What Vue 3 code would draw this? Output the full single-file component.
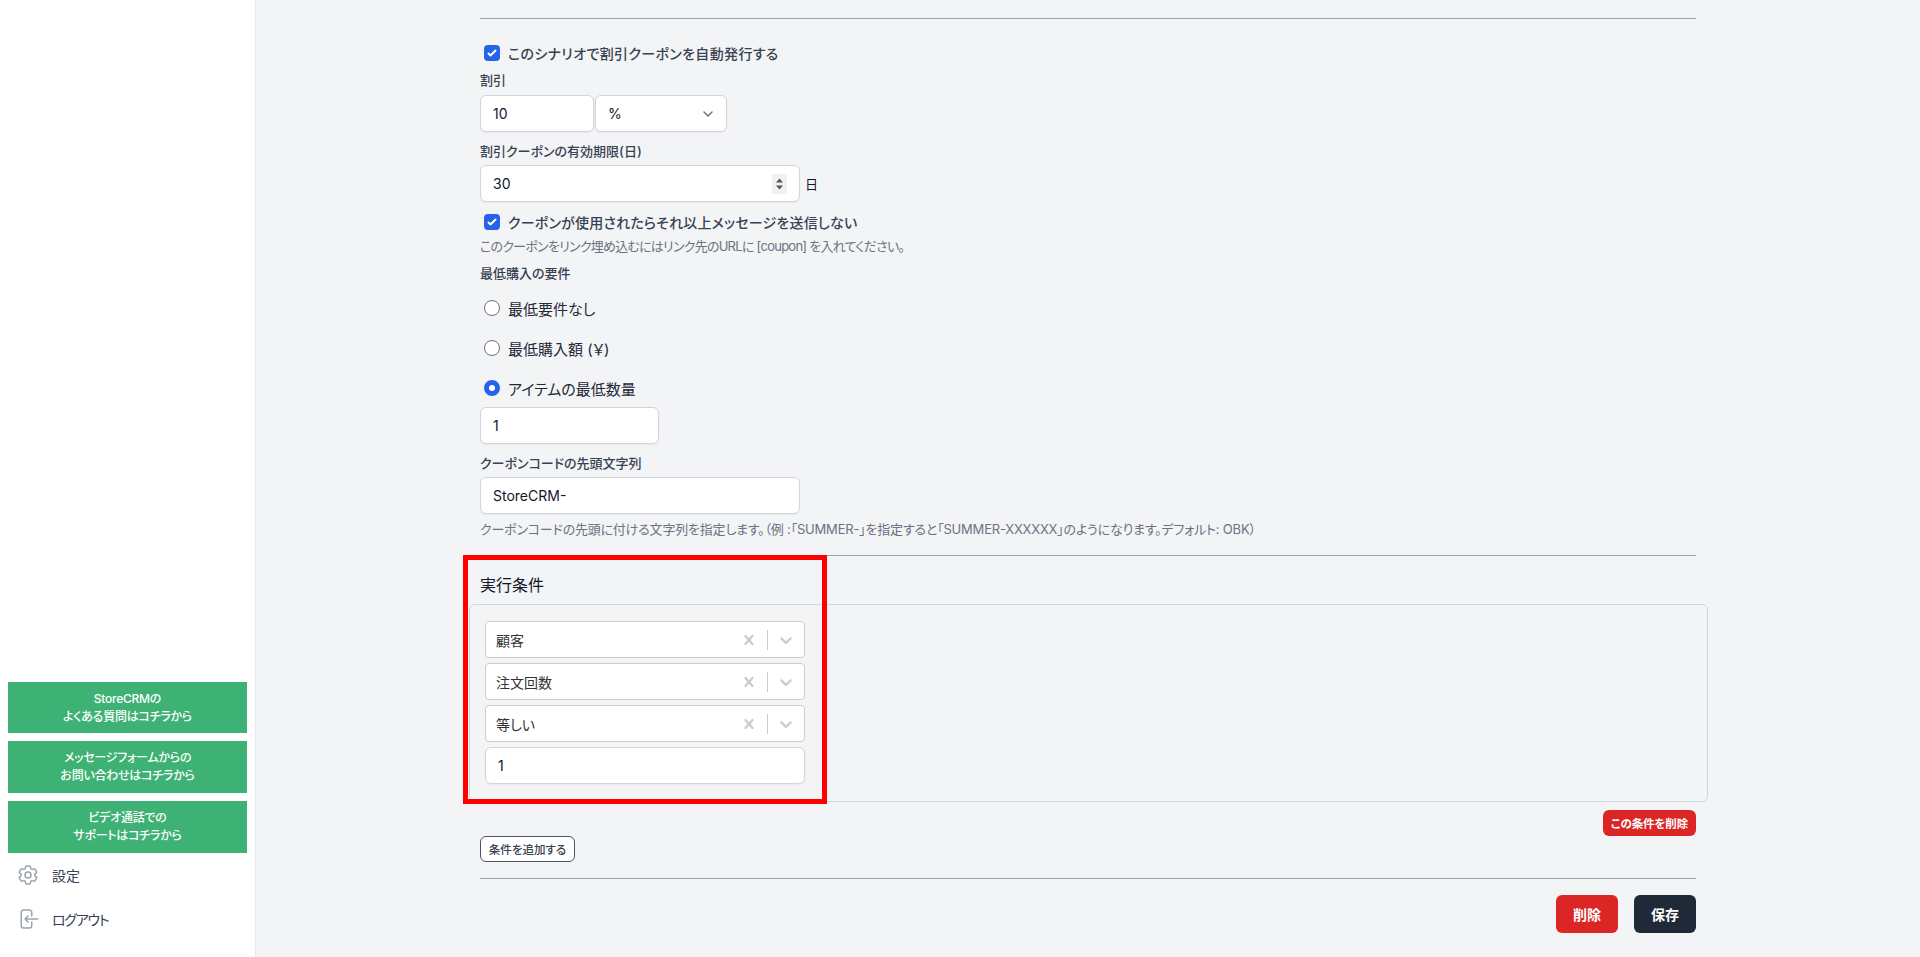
<script setup>
const selects = ['顧客', '注文回数', '等しい']
const supportLinks = [
  ['StoreCRMの', 'よくある質問はコチラから'],
  ['メッセージフォームからの', 'お問い合わせはコチラから'],
  ['ビデオ通話での', 'サポートはコチラから'],
]
</script>

<template>
  <div class="page">
    <aside class="sidebar">
      <a v-for="(link, i) in supportLinks" :key="i" class="support" :class="{ tall: i > 0 }">
        <span>{{ link[0] }}</span><span>{{ link[1] }}</span>
      </a>
      <div class="nav first">
        <svg class="nav-icon" viewBox="0 0 24 24" fill="none" stroke="currentColor" stroke-width="1.5" stroke-linecap="round" stroke-linejoin="round"><path d="M9.594 3.94c.09-.542.56-.94 1.11-.94h2.593c.55 0 1.02.398 1.11.94l.213 1.281c.063.374.313.686.645.87.074.04.147.083.22.127.324.196.72.257 1.075.124l1.217-.456a1.125 1.125 0 011.37.49l1.296 2.247a1.125 1.125 0 01-.26 1.431l-1.003.827c-.293.24-.438.613-.431.992a6.759 6.759 0 010 .255c-.007.378.138.75.43.99l1.005.828c.424.35.534.954.26 1.43l-1.298 2.247a1.125 1.125 0 01-1.369.491l-1.217-.456c-.355-.133-.75-.072-1.076.124a6.57 6.57 0 01-.22.128c-.331.183-.581.495-.644.869l-.213 1.28c-.09.543-.56.941-1.11.941h-2.594c-.55 0-1.02-.398-1.11-.94l-.213-1.281c-.062-.374-.312-.686-.644-.87a6.52 6.52 0 01-.22-.127c-.325-.196-.72-.257-1.076-.124l-1.217.456a1.125 1.125 0 01-1.369-.49l-1.297-2.247a1.125 1.125 0 01.26-1.431l1.004-.827c.292-.24.437-.613.43-.992a6.932 6.932 0 010-.255c.007-.378-.138-.75-.43-.99l-1.004-.828a1.125 1.125 0 01-.26-1.43l1.297-2.247a1.125 1.125 0 011.37-.491l1.216.456c.356.133.751.072 1.076-.124.072-.044.146-.087.22-.128.332-.183.582-.495.644-.869l.214-1.281z"/><path d="M15 12a3 3 0 11-6 0 3 3 0 016 0z"/></svg>
        <span>設定</span>
      </div>
      <div class="nav">
        <svg class="nav-icon" viewBox="0 0 24 24" fill="none" stroke="currentColor" stroke-width="1.5" stroke-linecap="round" stroke-linejoin="round"><path d="M15.75 9V5.25A2.25 2.25 0 0013.5 3h-6a2.25 2.25 0 00-2.25 2.25v13.5A2.25 2.25 0 007.5 21h6a2.25 2.25 0 002.25-2.25V15M12 9l-3 3m0 0l3 3m-3-3h12.75"/></svg>
        <span class="nav-tight">ログアウト</span>
      </div>
    </aside>

    <main class="main">
      <div class="content">
        <hr class="rule" />

        <label class="check-row first-check">
          <span class="checkbox"><svg viewBox="0 0 16 16"><path d="M12.207 4.793a1 1 0 010 1.414l-5 5a1 1 0 01-1.414 0l-2-2a1 1 0 011.414-1.414L6.5 9.086l4.293-4.293a1 1 0 011.414 0z" fill="#fff"/></svg></span>
          <span class="check-text">このシナリオで割引クーポンを自動発行する</span>
        </label>

        <div class="label discount-label">割引</div>
        <div class="discount-row">
          <div class="box value-box discount-value">10</div>
          <div class="box value-box discount-unit">
            %
            <svg class="unit-chevron" viewBox="0 0 20 20" fill="none" stroke="#6b7280" stroke-width="1.5" stroke-linecap="round" stroke-linejoin="round"><path d="M6 8l4 4 4-4"/></svg>
          </div>
        </div>

        <div class="label expiry-label">割引クーポンの有効期限(日)</div>
        <div class="expiry-row">
          <div class="box value-box wide">
            30
            <span class="spinner">
              <svg viewBox="0 0 15 20"><path d="M7.5 4.5L11 8.5H4z" fill="#555"/><path d="M7.5 15.5L4 11.5h7z" fill="#555"/></svg>
            </span>
          </div>
          <span class="unit">日</span>
        </div>

        <label class="check-row second-check">
          <span class="checkbox"><svg viewBox="0 0 16 16"><path d="M12.207 4.793a1 1 0 010 1.414l-5 5a1 1 0 01-1.414 0l-2-2a1 1 0 011.414-1.414L6.5 9.086l4.293-4.293a1 1 0 011.414 0z" fill="#fff"/></svg></span>
          <span class="check-text">クーポンが使用されたらそれ以上メッセージを送信しない</span>
        </label>
        <p class="help coupon-help">このクーポンをリンク埋め込むにはリンク先のURLに [coupon] を入れてください。</p>

        <div class="label min-label">最低購入の要件</div>
        <div class="radio-list">
          <label class="radio-row"><span class="radio"></span><span>最低要件なし</span></label>
          <label class="radio-row"><span class="radio"></span><span>最低購入額 (￥)</span></label>
          <label class="radio-row"><span class="radio on"></span><span>アイテムの最低数量</span></label>
        </div>
        <div class="box value-box quantity">1</div>

        <div class="label prefix-label">クーポンコードの先頭文字列</div>
        <div class="box value-box wide">StoreCRM-</div>
        <p class="help prefix-help">クーポンコードの先頭に付ける文字列を指定します。（例 :「SUMMER-」を指定すると「SUMMER-XXXXXX」のようになります。デフォルト: OBK）</p>

        <hr class="rule section-rule" />

        <h3 class="section-title">実行条件</h3>
        <div class="condition-panel">
          <div class="condition-fields">
            <div v-for="item in selects" :key="item" class="combo">
              <span class="combo-value">{{ item }}</span>
              <svg class="combo-clear" viewBox="0 0 20 20"><path fill="#cccccc" d="M14.348 14.849c-.469.469-1.229.469-1.697 0L10 11.819l-2.651 3.029c-.469.469-1.229.469-1.697 0-.469-.469-.469-1.229 0-1.697l2.758-3.15-2.759-3.152c-.469-.469-.469-1.228 0-1.697s1.228-.469 1.697 0L10 8.183l2.651-3.031c.469-.469 1.228-.469 1.697 0s.469 1.229 0 1.697l-2.758 3.152 2.758 3.15c.469.469.469 1.229 0 1.698z"/></svg>
              <span class="combo-sep"></span>
              <svg class="combo-arrow" viewBox="0 0 20 20"><path fill="#cccccc" d="M4.516 7.548c.436-.446 1.043-.481 1.576 0L10 11.295l3.908-3.747c.533-.481 1.141-.446 1.574 0 .436.445.408 1.197 0 1.615-.406.418-4.695 4.502-4.695 4.502-.217.223-.502.335-.787.335s-.57-.112-.789-.335c0 0-4.287-4.084-4.695-4.502s-.436-1.17 0-1.615z"/></svg>
            </div>
            <div class="box value-box condition-input">1</div>
          </div>
        </div>

        <div class="remove-row"><button class="btn-small danger">この条件を削除</button></div>
        <button class="btn-add">条件を追加する</button>

        <hr class="rule footer-rule" />
        <div class="actions">
          <button class="btn danger">削除</button>
          <button class="btn dark">保存</button>
        </div>
      </div>
    </main>

    <div class="highlight"></div>
  </div>
</template>

<style>
html, body { margin: 0; padding: 0; background: #f3f4f6; }
</style>

<style scoped>
* { box-sizing: border-box; }
.page {
  display: flex;
  position: relative;
  height: 957px;
  overflow: hidden;
  background: #f3f4f6;
  color: #374151;
  font-family: Inter, "Noto Sans CJK JP", sans-serif;
  font-size: 14px;
  font-feature-settings: "palt";
}
.sidebar {
  width: 256px;
  flex: none;
  display: flex;
  flex-direction: column;
  justify-content: flex-end;
  background: #fff;
  border-right: 1px solid #e5e7eb;
  padding: 0 8px 16px;
}
.support {
  display: flex;
  flex-direction: column;
  align-items: center;
  justify-content: center;
  height: 51px;
  margin-bottom: 8px;
  background: #3eb274;
  color: #fff;
  font-size: 12px;
  font-weight: 500;
  line-height: 18px;
  letter-spacing: -.25px;
}
.support.tall { height: 52px; }
.support:last-of-type { margin-bottom: 0; }
.nav {
  display: flex;
  align-items: center;
  height: 44px;
  padding-left: 8px;
  gap: 12px;
  color: #374151;
  font-size: 14px;
  font-weight: 400;
}
.nav-tight { letter-spacing: -1.3px; }
.nav-icon { width: 24px; height: 24px; color: #9ca3af; flex: none; }

.main { flex: 1; min-width: 0; padding-left: 224px; }
.content { width: 1216px; padding-top: 18px; }
.rule { margin: 0; border: 0; height: 1px; background: #9ca3af; }

.check-row { display: flex; align-items: center; height: 20px; padding-left: 4px; gap: 8px; }
.first-check { margin-top: 24px; }
.second-check { margin-top: 10px; }
.check-text { font-weight: 500; font-size: 14px; letter-spacing: .2px; }
.first-check .check-text { letter-spacing: .35px; }
.checkbox { width: 16px; height: 16px; border-radius: 4px; background: #2563eb; flex: none; display: flex; }
.checkbox svg { width: 16px; height: 16px; }

.label { font-size: 13px; line-height: 18px; font-weight: 500; }
.discount-label { margin-top: 8px; }
.discount-row { display: flex; gap: 1px; margin-top: 6px; }
.expiry-label { margin-top: 10px; }
.expiry-row { display: flex; align-items: center; gap: 5px; margin-top: 5px; }
.min-label { margin-top: 10px; }
.prefix-label { margin-top: 10px; }

.box {
  height: 37px;
  background: #fff;
  border: 1px solid #d1d5db;
  border-radius: 6px;
  box-shadow: 0 1px 2px rgba(0, 0, 0, .05);
}
.value-box { display: flex; align-items: center; padding: 0 12px; color: #111827; font-size: 14px; position: relative; }
.discount-value { width: 114px; }
.discount-unit { width: 132px; justify-content: space-between; }
.unit-chevron { width: 20px; height: 20px; position: absolute; right: 8px; top: 8px; }
.wide { width: 320px; }
.unit { color: #111827; font-size: 13px; }
.spinner { position: absolute; right: 12px; top: 8px; width: 15px; height: 20px; background: #f0f0f0; display: flex; }
.spinner svg { width: 15px; height: 20px; }
.quantity { width: 179px; margin-top: 9px; }
.prefix-label + .box { margin-top: 5px; }

.help { margin: 0; font-size: 13px; line-height: 16px; color: #6b7280; letter-spacing: -.2px; }
.coupon-help { margin-top: 6px; letter-spacing: -.75px; }
.prefix-help { margin-top: 7px; }

.radio-list { display: flex; flex-direction: column; gap: 20px; margin-top: 16px; }
.radio-row { display: flex; align-items: center; height: 20px; gap: 8px; padding-left: 4px; color: #1f2937; font-size: 15px; font-weight: 400; }
.radio { width: 16px; height: 16px; border-radius: 50%; background: #fff; border: 1px solid #6b7280; flex: none; }
.radio.on { border: 5px solid #2563eb; }

.section-rule { margin-top: 18px; }
.section-title { margin: 18px 0 0; font-size: 16px; font-weight: 400; line-height: 22px; color: #111827; }
.condition-panel {
  width: 1239px;
  height: 198px;
  margin: 8px 0 0 -11px;
  padding: 16px 15px 15px;
  border: 1px solid #d1d5db;
  border-radius: 6px;
}
.condition-fields { width: 320px; display: flex; flex-direction: column; gap: 5px; }
.combo {
  height: 37px;
  display: flex;
  align-items: center;
  background: #fff;
  border: 1px solid #cccccc;
  border-radius: 4px;
  padding: 0 8px 0 10px;
}
.combo-value { flex: 1; font-size: 14px; color: #333; }
.combo-clear { width: 20px; height: 20px; }
.combo-sep { width: 1px; height: 20px; margin: 0 8px 0 8px; background: #cccccc; }
.combo-arrow { width: 20px; height: 20px; }
.condition-input { width: 100%; padding-left: 12px; }

.remove-row { display: flex; justify-content: flex-end; margin-top: 8px; }
button { font-family: inherit; font-feature-settings: inherit; cursor: pointer; }
.btn-small {
  height: 26px;
  width: 93px;
  padding: 0;
  border: 0;
  border-radius: 6px;
  color: #fff;
  font-size: 11.5px;
  font-weight: 700;
  letter-spacing: -.1px;
}
.danger { background: #dc2626; }
.btn-add {
  display: block;
  width: 95px;
  height: 26px;
  padding: 0;
  background: #fff;
  border: 1px solid #4b5563;
  border-radius: 6px;
  color: #374151;
  font-size: 11.5px;
  font-weight: 500;
}
.footer-rule { margin-top: 16px; }
.actions { display: flex; justify-content: flex-end; gap: 16px; margin-top: 16px; }
.btn {
  width: 62px;
  height: 38px;
  border: 0;
  border-radius: 6px;
  color: #fff;
  font-size: 14px;
  font-weight: 700;
}
.dark { background: #1f2937; }

.highlight {
  position: absolute;
  left: 463px;
  top: 555px;
  width: 364px;
  height: 249px;
  border: 5px solid #ff0000;
  pointer-events: none;
}
</style>
